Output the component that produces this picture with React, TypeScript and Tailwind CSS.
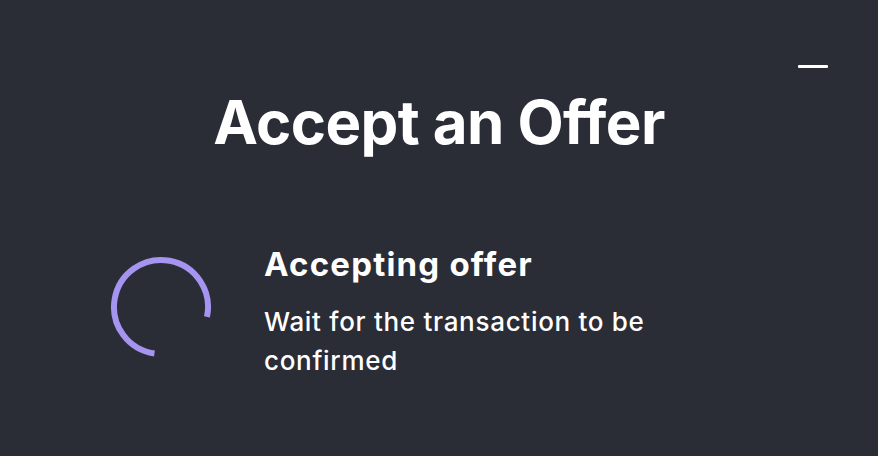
import React from "react";

function arcPath() {
  const cx = 53, cy = 53, r = 47;
  const a0 = (98 * Math.PI) / 180;
  const a1 = (372 * Math.PI) / 180;
  const x0 = cx + r * Math.cos(a0), y0 = cy + r * Math.sin(a0);
  const x1 = cx + r * Math.cos(a1), y1 = cy + r * Math.sin(a1);
  return `M ${x0.toFixed(2)} ${y0.toFixed(2)} A ${r} ${r} 0 1 1 ${x1.toFixed(2)} ${y1.toFixed(2)}`;
}

export default function App() {
  return (
    <div
      className="w-[878px] h-[456px] bg-[#2a2c36] text-white relative overflow-hidden"
      style={{ fontFamily: "Inter, 'Noto Sans', sans-serif" }}
    >
      <button className="absolute left-[798px] top-[65px] w-[30px] h-[3px] bg-white rounded-[1px]" aria-label="minimize" />
      <h1 className="pt-[82px] text-center text-[60px] leading-[80px] font-bold tracking-[-0.6px]">
        Accept an Offer
      </h1>
      <div className="flex items-start mt-[82px] pl-[108px]">
        <svg width="106" height="106" viewBox="0 0 106 106" className="mt-[10px] shrink-0">
          <path d={arcPath()} fill="none" stroke="#a594f0" strokeWidth="6" />
        </svg>
        <div className="ml-[50px]">
          <div className="text-[33px] leading-[40px] font-bold tracking-[1.2px]">Accepting offer</div>
          <div className="mt-[18px] w-[420px] text-[26px] leading-[39px] font-medium tracking-[0.7px]">
            Wait for the transaction to be confirmed
          </div>
        </div>
      </div>
    </div>
  );
}
